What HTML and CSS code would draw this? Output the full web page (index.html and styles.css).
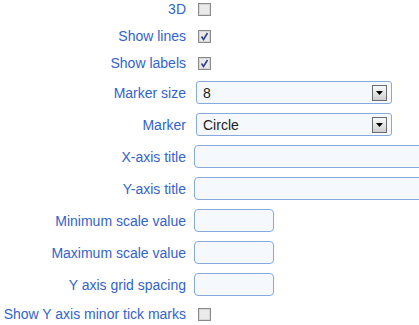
FILE: index.html
```html
<!DOCTYPE html>
<html lang="en">
<head>
  <meta charset="UTF-8" />
  <meta name="viewport" content="width=device-width, initial-scale=1.0"/>
  <title>Chart options</title>
  <link rel="stylesheet" href="styles.css">
</head>
<body>

  <form class="options">
    <label class="opt-label">3D</label>
    <div class="opt-field">
      <svg class="check" width="13" height="13" viewBox="0 0 13 13"><rect x="0.5" y="0.5" width="12" height="12" class="check-box"/><rect x="1.5" y="1.5" width="10" height="10" class="check-inner"/></svg>
    </div>

    <label class="opt-label">Show lines</label>
    <div class="opt-field">
      <svg class="check" width="13" height="13" viewBox="0 0 13 13"><rect x="0.5" y="0.5" width="12" height="12" class="check-box"/><rect x="1.5" y="1.5" width="10" height="10" class="check-inner"/><path d="M3.5 6.5 L5.5 9.5 L9.5 3" class="check-mark"/></svg>
    </div>

    <label class="opt-label">Show labels</label>
    <div class="opt-field">
      <svg class="check" width="13" height="13" viewBox="0 0 13 13"><rect x="0.5" y="0.5" width="12" height="12" class="check-box"/><rect x="1.5" y="1.5" width="10" height="10" class="check-inner"/><path d="M3.5 6.5 L5.5 9.5 L9.5 3" class="check-mark"/></svg>
    </div>

    <label class="opt-label">Marker size</label>
    <div class="opt-field">
      <div class="select">
        <span class="select-text">8</span>
        <span class="select-btn"><svg width="7" height="4" viewBox="0 0 7 4"><path d="M0 0 H7 L3.5 4 Z" fill="#000"/></svg></span>
      </div>
    </div>

    <label class="opt-label">Marker</label>
    <div class="opt-field">
      <div class="select">
        <span class="select-text">Circle</span>
        <span class="select-btn"><svg width="7" height="4" viewBox="0 0 7 4"><path d="M0 0 H7 L3.5 4 Z" fill="#000"/></svg></span>
      </div>
    </div>

    <label class="opt-label">X-axis title</label>
    <div class="opt-field"><input class="text wide" type="text"></div>

    <label class="opt-label">Y-axis title</label>
    <div class="opt-field"><input class="text wide" type="text"></div>

    <label class="opt-label">Minimum scale value</label>
    <div class="opt-field"><input class="text short" type="text"></div>

    <label class="opt-label">Maximum scale value</label>
    <div class="opt-field"><input class="text short" type="text"></div>

    <label class="opt-label">Y axis grid spacing</label>
    <div class="opt-field"><input class="text short" type="text"></div>

    <label class="opt-label">Show Y axis minor tick marks</label>
    <div class="opt-field">
      <svg class="check" width="13" height="13" viewBox="0 0 13 13"><rect x="0.5" y="0.5" width="12" height="12" class="check-box"/><rect x="1.5" y="1.5" width="10" height="10" class="check-inner"/></svg>
    </div>
  </form>

</body>
</html>
```

FILE: styles.css
```css
body {
  margin: 0;
  background-color: #fff;
  font-family: "Liberation Sans", Arial, sans-serif;
  overflow: hidden;
}

.options {
  display: grid;
  grid-template-columns: 186px 1fr;
  column-gap: 8px;
  row-gap: 9px;
}

.opt-label {
  display: flex;
  align-items: center;
  justify-content: flex-end;
  min-height: 18px;
  font-size: 14px;
  color: #3163cf;
  white-space: nowrap;
}

.opt-field {
  display: flex;
  align-items: center;
  min-height: 18px;
}

.check {
  display: block;
  margin-left: 4px;
}

.check-box {
  fill: none;
  stroke: #8a8a8a;
}

.check-inner {
  fill: #eaeaea;
  stroke: #d6d6d6;
}

.check-mark {
  fill: none;
  stroke: #33418c;
  stroke-width: 1.6;
}

.select {
  display: flex;
  align-items: center;
  justify-content: space-between;
  box-sizing: border-box;
  width: 196px;
  height: 23px;
  margin-left: 2px;
  padding: 0 4px 0 6px;
  border: 1px solid #86aadb;
  border-radius: 3px;
  background-color: #f5f9fd;
  font-size: 14px;
  color: #222;
}

.select-btn {
  display: flex;
  align-items: center;
  justify-content: center;
  box-sizing: border-box;
  width: 15px;
  height: 16px;
  border: 1px solid #6b6b6b;
  background: linear-gradient(#fafafa, #cfcfcf);
}

.text {
  box-sizing: border-box;
  height: 23px;
  margin: 0;
  padding: 2px 5px;
  border: 1px solid #86aadb;
  border-radius: 4px;
  background-color: #f5f9fd;
  font-family: "Liberation Sans", Arial, sans-serif;
  font-size: 14px;
}

.wide {
  width: 260px;
}

.short {
  width: 80px;
}
```
